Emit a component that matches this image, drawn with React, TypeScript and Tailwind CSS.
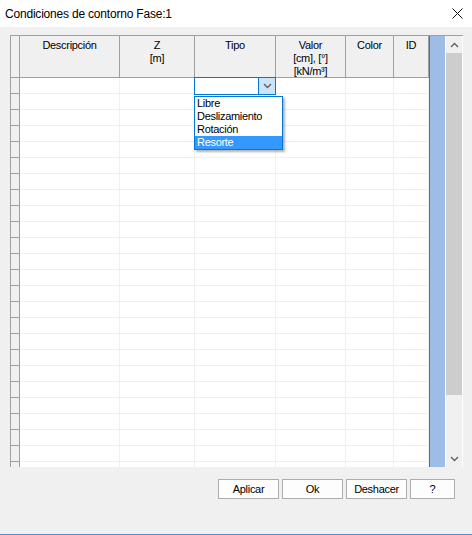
import React from "react";

const cols = [
  { w: "w-[100px]", lines: ["Descripción"] },
  { w: "w-[75px]", lines: ["Z", "[m]"] },
  { w: "w-[81px]", lines: ["Tipo"] },
  { w: "w-[70px]", lines: ["Valor", "[cm], [°]", "[kN/m³]"] },
  { w: "w-[48px]", lines: ["Color"] },
  { w: "w-[35px]", lines: ["ID"] },
];

const options = ["Libre", "Deslizamiento", "Rotación", "Resorte"];

function Chevron({ up }: { up?: boolean }) {
  return (
    <svg width="9" height="6" viewBox="0 0 9 6">
      <path
        d={up ? "M1 5 L4.5 1.5 L8 5" : "M1 1 L4.5 4.5 L8 1"}
        fill="none"
        stroke="#606060"
        strokeWidth="1.4"
      />
    </svg>
  );
}

function Grid() {
  const rows = Array.from({ length: 25 });
  return (
    <div className="relative mx-[10px] mr-[9px] mt-[8px] h-[432px] flex border-t border-l border-[#a0a0a0] overflow-hidden">
      {/* table */}
      <div className="flex flex-col">
        <div className="flex h-[42px]">
          <div className="w-[9px] border-r border-b border-[#a0a0a0] bg-[#f0f0f0]" />
          {cols.map((c, i) => (
            <div
              key={i}
              className={`${c.w} border-r border-b border-[#a0a0a0] bg-[#f0f0f0] pt-[3px] flex flex-col items-center leading-[13px]`}
            >
              {c.lines.map((l) => (
                <span key={l}>{l}</span>
              ))}
            </div>
          ))}
        </div>
        {rows.map((_, r) => (
          <div key={r} className="flex h-[16px] shrink-0">
            <div className="w-[9px] border-r border-b border-[#a0a0a0] bg-[#f0f0f0]" />
            {cols.map((c, i) => (
              <div key={i} className={`${c.w} border-r border-b border-[#f0f0f0] bg-white`} />
            ))}
          </div>
        ))}
      </div>

      {/* empty area right of columns */}
      <div className="w-[16px] border-l border-[#6b6b6b] bg-[#9dbde6]" />

      {/* scrollbar */}
      <div className="w-[18px] bg-white px-px flex">
        <div className="w-[16px] bg-[#f0f0f0] flex flex-col">
          <div className="h-[17px] flex items-center justify-center">
            <Chevron up />
          </div>
          <div className="h-[342px] bg-[#cdcdcd]" />
          <div className="flex-1" />
          <div className="h-[17px] flex items-center justify-center">
            <Chevron />
          </div>
        </div>
      </div>

      {/* combo box in edit */}
      <div className="absolute left-[183px] top-[41px] w-[82px] h-[18px] border border-[#0078d7] bg-white flex justify-end">
        <div className="w-[17px] h-full bg-[#cce4f7] border-l border-[#0078d7] flex items-center justify-center">
          <Chevron />
        </div>
      </div>

      {/* dropdown list */}
      <div className="absolute left-[183px] top-[60px] w-[89px] border border-[#0078d7] bg-white shadow-[2px_2px_2px_rgba(0,0,0,0.3)]">
        {options.map((o) => (
          <div
            key={o}
            className={`h-[13px] leading-[13px] pl-[2px] ${o === "Resorte" ? "bg-[#3399ff] text-white" : "text-black"}`}
          >
            {o}
          </div>
        ))}
      </div>
    </div>
  );
}

export default function App() {
  return (
    <div
      className="w-[472px] h-[535px] flex text-[11px] tracking-[-0.3px] text-black overflow-hidden"
      style={{ fontFamily: '"Liberation Sans", Arial, sans-serif' }}
    >
      <div className="w-px flex flex-col">
        <div className="h-[380px] bg-[#8fb0cf]" />
        <div className="flex-1 bg-[#e8801f]" />
      </div>
      <div className="flex-1 flex flex-col">
        <div className="h-[27px] bg-white flex items-center pl-[5px] pr-[9px]">
          <span className="text-[12px] tracking-[-0.2px] flex-1">Condiciones de contorno Fase:1</span>
          <svg width="11" height="11" viewBox="0 0 11 11">
            <path d="M0.5 0.5 L10.5 10.5 M10.5 0.5 L0.5 10.5" stroke="#111" strokeWidth="1" />
          </svg>
        </div>
        <div className="flex-1 bg-[#f0f0f0] flex flex-col">
          <Grid />
          <div className="flex justify-end gap-[3px] mt-[12px] pr-[17px]">
            {["Aplicar", "Ok", "Deshacer", "?"].map((b) => (
              <button
                key={b}
                className={`${b === "?" ? "w-[45px]" : "w-[61px]"} h-[20px] border border-[#adadad] bg-[#fdfdfd] leading-none`}
              >
                {b}
              </button>
            ))}
          </div>
        </div>
        <div className="h-px bg-[#4a90d9]" />
      </div>
    </div>
  );
}
